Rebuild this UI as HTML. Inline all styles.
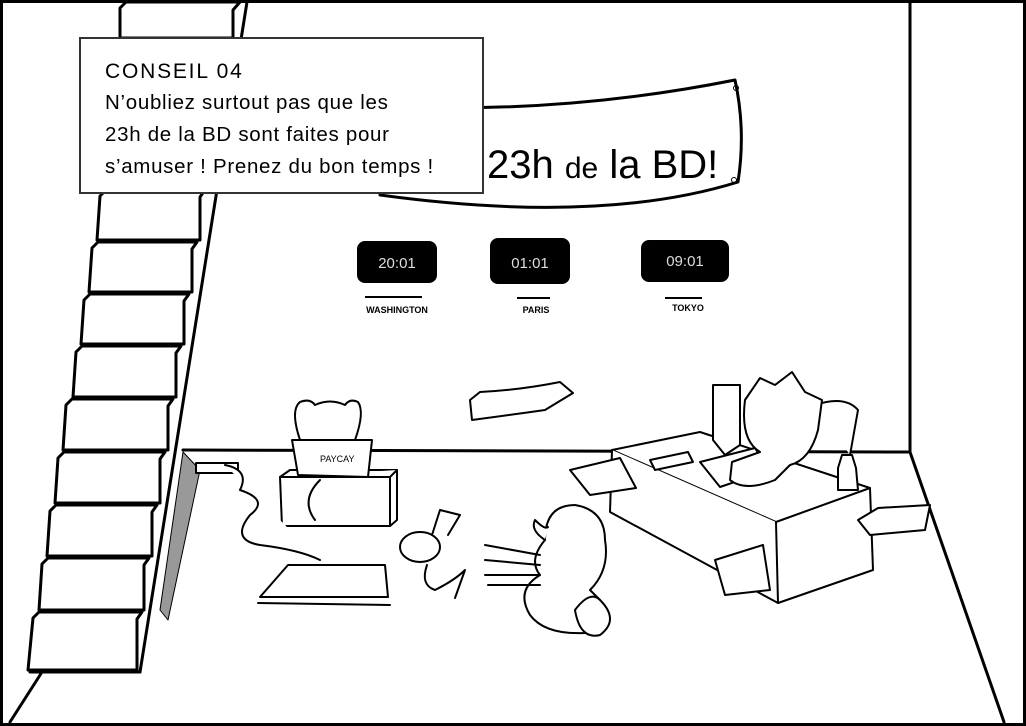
<!DOCTYPE html>
<html><head><meta charset="utf-8"><style>
html,body{margin:0;padding:0;background:#fff;}
svg{display:block}
text{font-family:"Liberation Sans",sans-serif;}
</style></head><body>
<svg width="1026" height="726" viewBox="0 0 1026 726" xmlns="http://www.w3.org/2000/svg">
<rect x="0" y="0" width="1026" height="726" fill="#fff"/>
<g fill="none" stroke="#000" stroke-linecap="round" stroke-linejoin="round">
<line x1="910" y1="2" x2="910" y2="452" stroke-width="3"/>
<line x1="183" y1="450" x2="910" y2="452" stroke-width="3"/>
<line x1="910" y1="452" x2="1004" y2="722" stroke-width="3"/>
<line x1="247" y1="2" x2="140" y2="672" stroke-width="3"/>
<line x1="140" y1="672" x2="30" y2="672" stroke-width="3"/>
<line x1="42" y1="672" x2="10" y2="722" stroke-width="3"/>
<path d="M120 8 L126 2 L240 2 L233 10 L233 38 L120 38 Z" stroke-width="3" fill="#fff"/>
<path d="M183 452 L200 470 L168 620 L160 610 Z" fill="#999" stroke-width="1"/>
</g>
<g fill="#fff" stroke="#000" stroke-width="3" stroke-linejoin="round">
<path d="M100 196 L106 190 L205 190 L200 197 L200 240 L97 240 Z"/>
<path d="M92 248 L98 242 L197 242 L192 249 L192 292 L89 292 Z"/>
<path d="M84 300 L90 294 L189 294 L184 301 L184 344 L81 344 Z"/>
<path d="M76 352 L82 346 L181 346 L176 353 L176 397 L73 397 Z"/>
<path d="M66 405 L72 399 L173 399 L168 406 L168 450 L63 450 Z"/>
<path d="M58 458 L64 452 L165 452 L160 459 L160 503 L55 503 Z"/>
<path d="M50 511 L56 505 L157 505 L152 512 L152 556 L47 556 Z"/>
<path d="M42 564 L48 558 L149 558 L144 565 L144 610 L39 610 Z"/>
<path d="M33 618 L39 612 L142 612 L137 619 L137 670 L28 670 Z"/>
</g>
<g fill="#fff" stroke="#000" stroke-width="3" stroke-linejoin="round">
<path d="M380 106 Q560 115 735 80 Q746 130 738 182 Q600 225 380 195 Z"/>
</g>
<circle cx="736" cy="88" r="2.5" fill="none" stroke="#000"/>
<circle cx="734" cy="180" r="2.5" fill="none" stroke="#000"/>
<text x="487" y="178" font-size="40" fill="#000">23h <tspan font-size="30">de</tspan>  la BD!</text>
<rect x="80" y="38" width="403" height="155" fill="#fff" stroke="#333" stroke-width="2"/>
<text x="105" y="78" font-size="21" fill="#000" letter-spacing="1.8">CONSEIL 04</text>
<text x="105" y="109" font-size="20.5" fill="#000" letter-spacing="0.7">N’oubliez surtout pas que les</text>
<text x="105" y="141" font-size="20.5" fill="#000" letter-spacing="0.7">23h de la BD sont faites pour</text>
<text x="105" y="173" font-size="20.5" fill="#000" letter-spacing="0.7">s’amuser ! Prenez du bon temps !</text>
<rect x="357" y="241" width="80" height="42" rx="8" fill="#000"/>
<rect x="490" y="238" width="80" height="46" rx="8" fill="#000"/>
<rect x="641" y="240" width="88" height="42" rx="8" fill="#000"/>
<text x="397" y="268" font-size="15" fill="#ddd" text-anchor="middle" font-family="'Liberation Mono',monospace">20:01</text>
<text x="530" y="268" font-size="15" fill="#ddd" text-anchor="middle" font-family="'Liberation Mono',monospace">01:01</text>
<text x="685" y="266" font-size="15" fill="#ddd" text-anchor="middle" font-family="'Liberation Mono',monospace">09:01</text>
<g stroke="#000" stroke-width="2"><line x1="365" y1="297" x2="422" y2="297"/><line x1="517" y1="298" x2="550" y2="298"/><line x1="665" y1="298" x2="702" y2="298"/></g>
<g font-size="9" font-weight="bold" fill="#000" text-anchor="middle"><text x="397" y="313">WASHINGTON</text><text x="536" y="313">PARIS</text><text x="688" y="311">TOKYO</text></g>
<g fill="#fff" stroke="#000" stroke-width="2" stroke-linejoin="round" stroke-linecap="round">
<path d="M280 477 L290 470 L397 470 L397 520 L390 526 L282 526 Z"/>
<path d="M280 477 L390 477 L397 470 M390 477 L390 526"/>
<path d="M300 440 Q290 410 300 402 Q310 398 315 405 Q330 398 345 405 Q350 398 358 402 Q365 412 355 440"/>
<path d="M292 440 L372 440 L368 477 L298 475 Z"/>
<text x="320" y="462" font-size="9" fill="#000" stroke="none">PAYCAY</text>
<rect x="196" y="463" width="42" height="10"/>
<path d="M225 465 Q250 470 240 490 Q270 500 250 515 Q230 540 260 545 Q300 550 320 560" />
<path d="M320 480 Q300 500 315 520"/>
<path d="M260 597 L288 565 L385 565 L388 597 Z"/>
<path d="M258 603 L390 605"/>
<ellipse cx="420" cy="547" rx="20" ry="15"/>
<path d="M432 535 L440 510 L460 515 L448 535"/>
<path d="M427 565 Q420 585 435 590 Q455 580 465 570 L455 598"/>
<path d="M545 540 Q545 505 575 505 Q605 510 605 540 Q610 570 590 590 L600 600 Q615 630 585 633 Q545 635 530 615 Q515 590 540 575 Q528 560 545 540 Z"/>
<path d="M545 540 Q530 530 535 520 Q545 530 548 527"/>
<path d="M575 610 Q590 590 600 600 Q620 620 600 635 Q580 640 575 610 Z"/>
<path d="M485 545 L540 555 M485 560 L540 565 M485 575 L540 575 M488 585 L540 585"/>
<path d="M470 400 L480 392 Q520 390 560 382 L573 393 L545 410 Q510 415 472 420 Z"/>
<path d="M612 450 L700 432 L870 488 L776 522 Z"/>
<path d="M612 450 L610 512 L778 603 L776 522"/>
<path d="M778 603 L873 570 L870 488"/>
<path d="M700 462 L755 448 L770 470 L720 487 Z"/>
<path d="M815 405 Q845 395 858 410 L850 455"/>
<path d="M745 400 L760 378 L775 385 L792 372 L805 392 L822 400 L818 430 Q810 460 790 465 L775 480 Q745 492 730 480 L732 462 L760 452 Q740 440 745 400 Z"/>
<path d="M740 385 L740 445 L725 455 L713 440 L713 385 Z"/>
<path d="M838 468 L842 455 L852 455 L856 468 L858 490 L838 490 Z"/>
<path d="M570 470 L620 458 L636 488 L590 495 Z"/>
<path d="M858 520 L878 508 L930 505 L925 530 L870 535 Z"/>
<path d="M715 560 L763 545 L770 590 L725 595 Z"/>
<path d="M650 460 L688 452 L693 462 L655 470 Z"/>
</g>
<rect x="1.5" y="1.5" width="1023" height="723" fill="none" stroke="#000" stroke-width="3"/>
</svg>
</body></html>
